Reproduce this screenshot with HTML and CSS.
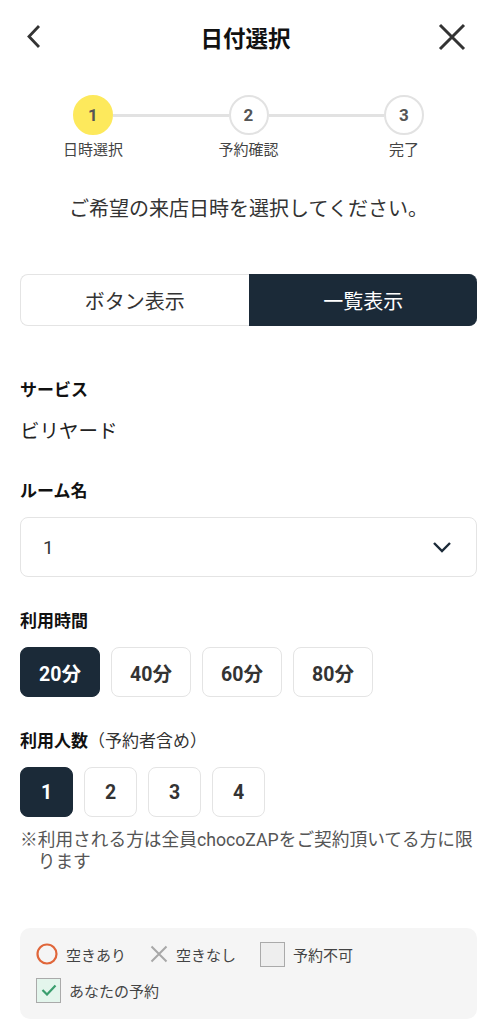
FILE: index.html
```html
<!DOCTYPE html>
<html>

<head>
    <title>日付選択</title>
    <link rel="stylesheet" href="styles.css">
</head>

<body>
    <div class="header">
        <svg class="header-back" width="24" height="28" viewBox="0 0 24 28">
            <path d="M15 3 L5 13.5 L15 24" fill="none" stroke="#333" stroke-width="2.8" />
        </svg>
        <h1 class="header-title">日付選択</h1>
        <svg class="header-close" width="30" height="30" viewBox="0 0 30 30">
            <path d="M3 3 L27 27 M27 3 L3 27" fill="none" stroke="#333" stroke-width="3" />
        </svg>
    </div>

    <div class="steps">
        <div class="step">
            <div class="step-num step-active">1</div>
            <div class="step-label">日時選択</div>
        </div>
        <div class="step-line"></div>
        <div class="step">
            <div class="step-num">2</div>
            <div class="step-label">予約確認</div>
        </div>
        <div class="step-line"></div>
        <div class="step">
            <div class="step-num">3</div>
            <div class="step-label">完了</div>
        </div>
    </div>

    <p class="lead">ご希望の来店日時を選択してください。</p>

    <div class="content">
        <div class="toggle">
            <div class="toggle-item">ボタン表示</div>
            <div class="toggle-item toggle-on">一覧表示</div>
        </div>

        <h2 class="field-label field-first">サービス</h2>
        <div class="field-value">ビリヤード</div>

        <h2 class="field-label field-room">ルーム名</h2>
        <div class="select">
            <span>1</span>
            <svg width="20" height="12" viewBox="0 0 20 12">
                <path d="M2 2 L10 10 L18 2" fill="none" stroke="#1b2a38" stroke-width="2.4" />
            </svg>
        </div>

        <h2 class="field-label">利用時間</h2>
        <div class="choices">
            <div class="choice choice-wide choice-on">20分</div>
            <div class="choice choice-wide">40分</div>
            <div class="choice choice-wide">60分</div>
            <div class="choice choice-wide">80分</div>
        </div>

        <h2 class="field-label">利用人数<span class="label-sub">（予約者含め）</span></h2>
        <div class="choices">
            <div class="choice choice-on">1</div>
            <div class="choice">2</div>
            <div class="choice">3</div>
            <div class="choice">4</div>
        </div>
        <p class="note">※利用される方は全員chocoZAPをご契約頂いてる方に限ります</p>

        <div class="legend">
            <div class="legend-row">
                <div class="legend-item">
                    <svg width="22" height="22" viewBox="0 0 22 22">
                        <circle cx="11" cy="11" r="9.5" fill="none" stroke="#e0663a" stroke-width="2.2" />
                    </svg>
                    <span>空きあり</span>
                </div>
                <div class="legend-item legend-gap">
                    <svg width="18" height="18" viewBox="0 0 18 18">
                        <path d="M1.5 1.5 L16.5 16.5 M16.5 1.5 L1.5 16.5" fill="none" stroke="#a8a8a8" stroke-width="2" />
                    </svg>
                    <span>空きなし</span>
                </div>
                <div class="legend-item legend-gap">
                    <div class="legend-box"></div>
                    <span>予約不可</span>
                </div>
            </div>
            <div class="legend-row">
                <div class="legend-item">
                    <div class="legend-box legend-mine">
                        <svg width="16" height="12" viewBox="0 0 16 12">
                            <path d="M1.5 6 L6 10.5 L14.5 1.5" fill="none" stroke="#3a9e6e" stroke-width="2.2" />
                        </svg>
                    </div>
                    <span>あなたの予約</span>
                </div>
            </div>
        </div>
    </div>
</body>

</html>
```

FILE: styles.css
```css
body {
    margin: 0;
    padding: 0;
    font-family: Roboto, "Noto Sans CJK JP", sans-serif;
    color: #222;
    background-color: #ffffff;
}

.header {
    height: 74px;
    display: grid;
    grid-template-columns: 1fr auto 1fr;
    align-items: center;
    padding: 0 30px 0 24px;
}

.header-back {
    display: block;
    justify-self: start;
}

.header-close {
    display: block;
    justify-self: end;
}

.header-title {
    margin: 0;
    font-size: 22.5px;
    font-weight: bold;
    color: #111;
}

.steps {
    display: flex;
    align-items: flex-start;
    margin: 21px 73px 0;
}

.step {
    width: 40px;
    display: flex;
    flex-direction: column;
    align-items: center;
}

.step-num {
    width: 36px;
    height: 36px;
    border: 2px solid #e2e2e2;
    border-radius: 50%;
    display: flex;
    align-items: center;
    justify-content: center;
    font-size: 17px;
    font-weight: bold;
    color: #555;
    background-color: #fff;
}

.step-active {
    border-color: #fde95c;
    background-color: #fde95c;
}

.step-label {
    margin-top: 4px;
    font-size: 15px;
    line-height: 22px;
    color: #444;
    white-space: nowrap;
}

.step-line {
    flex: 1;
    height: 3px;
    margin-top: 19px;
    background-color: #e2e2e2;
}

.lead {
    margin: 36px 0 0;
    text-align: center;
    font-size: 20px;
    line-height: 24px;
    color: #333;
}

.content {
    padding: 0 20px;
}

.toggle {
    display: flex;
    margin-top: 53px;
    height: 52px;
}

.toggle-item {
    flex: 1;
    display: flex;
    align-items: center;
    justify-content: center;
    font-size: 20px;
    color: #333;
    border: 1px solid #e4e4e4;
    border-right: none;
    border-radius: 8px 0 0 8px;
}

.toggle-on {
    background-color: #1b2a38;
    border-color: #1b2a38;
    color: #fff;
    border-radius: 0 8px 8px 0;
}

.field-label {
    margin: 32px 0 0;
    font-size: 17px;
    line-height: 24px;
    font-weight: bold;
    color: #111;
}

.field-first {
    margin-top: 52px;
}

.field-room {
    margin-top: 34px;
}

.label-sub {
    font-weight: normal;
    color: #333;
}

.field-value {
    margin-top: 17px;
    font-size: 19.5px;
    line-height: 26px;
    color: #222;
}

.select {
    margin-top: 14px;
    height: 58px;
    border: 1px solid #e4e4e4;
    border-radius: 8px;
    display: flex;
    align-items: center;
    justify-content: space-between;
    padding: 0 24px 0 22px;
    font-size: 19px;
    color: #333;
}

.choices {
    display: flex;
    gap: 11px;
    margin-top: 14px;
}

.choice {
    width: 51px;
    height: 48px;
    border: 1px solid #e4e4e4;
    border-radius: 8px;
    display: flex;
    align-items: center;
    justify-content: center;
    font-size: 19.5px;
    font-weight: bold;
    color: #333;
}

.choice-wide {
    width: 78px;
}

.choice-on {
    background-color: #1b2a38;
    border-color: #1b2a38;
    color: #fff;
}

.note {
    margin: 12px 0 0;
    padding-left: 1em;
    text-indent: -1em;
    font-size: 17.7px;
    line-height: 22px;
    color: #555;
}

.legend {
    margin-top: 55px;
    background-color: #f5f5f5;
    border-radius: 10px;
    padding: 13px 16px 16px;
}

.legend-row {
    display: flex;
    align-items: center;
    height: 26px;
}

.legend-row + .legend-row {
    margin-top: 10px;
}

.legend-item {
    display: flex;
    align-items: center;
    gap: 8px;
    font-size: 15px;
    color: #444;
}

.legend-gap {
    margin-left: 24px;
}

.legend-box {
    width: 23px;
    height: 23px;
    border: 1px solid #aaa;
    background-color: #eee;
    display: flex;
    align-items: center;
    justify-content: center;
}

.legend-mine {
    background-color: #e3f5ec;
}
```
